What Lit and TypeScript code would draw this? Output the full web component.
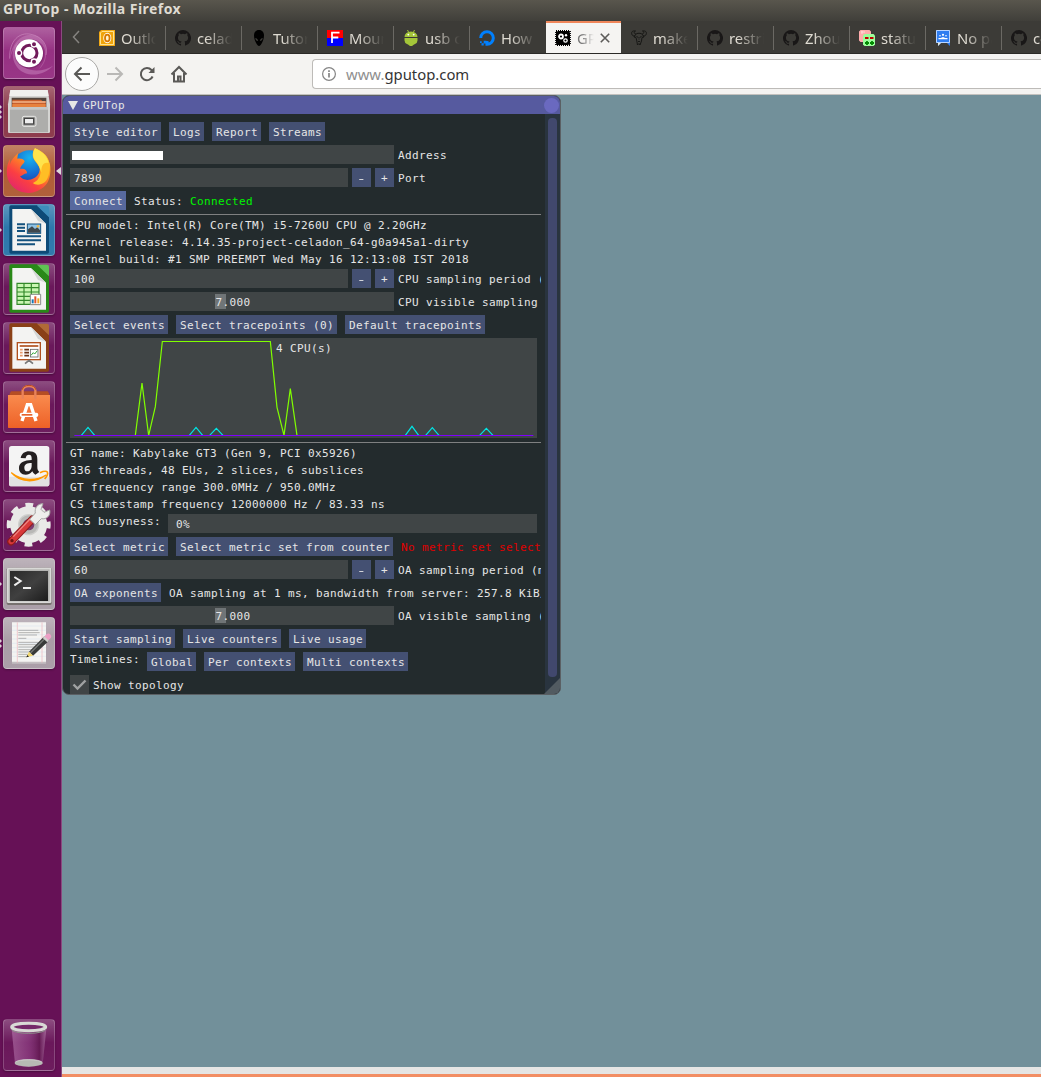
import { LitElement, html, css, svg, nothing } from "lit";
import type { TemplateResult } from "lit";
import { customElement } from "lit/decorators.js";
import { classMap } from "lit/directives/class-map.js";

/* ---------- favicons, 16x16 ---------- */
const octocat = svg`<path fill="#191717" d="M8 0a8 8 0 0 0-2.53 15.59c.4.07.55-.17.55-.38v-1.49c-2.23.49-2.7-.94-2.7-.94-.36-.92-.89-1.17-.89-1.17-.73-.5.05-.49.05-.49.81.06 1.23.83 1.23.83.72 1.23 1.88.87 2.34.67.07-.52.28-.88.51-1.08-1.78-.2-3.64-.89-3.64-3.95 0-.87.31-1.59.82-2.15-.08-.2-.36-1.02.08-2.12 0 0 .67-.22 2.2.82a7.6 7.6 0 0 1 4 0c1.53-1.04 2.2-.82 2.2-.82.44 1.1.16 1.92.08 2.12.51.56.82 1.27.82 2.15 0 3.07-1.87 3.75-3.65 3.95.29.25.54.73.54 1.48v2.19c0 .21.15.46.55.38A8 8 0 0 0 8 0z"/>`;
const favicons: Record<string, unknown> = {
  outlook: svg`<path d="M2 0h14v16H0V2z" fill="#f0a30a"/><path d="M3 1.4h11.6v13.2H1.4V3z" fill="none" stroke="#ffe9a0"/><ellipse cx="8.3" cy="8" rx="2.7" ry="3.9" fill="#ffd76a" stroke="#fff" stroke-width="2.6"/><ellipse cx="8.3" cy="8" rx="2.3" ry="3.4" fill="#fff3d0" stroke="#d87800" stroke-width="1.8"/>`,
  github: octocat,
  alien: svg`<path d="M8 0C4.5 0 3 2.5 3 5.6c0 4.400 3 10.400 5 10.400s5-6 5-10.400C13 2.500 11.500 0 8 0z" fill="#000"/><path d="M4.300 8c1.400.2 2.700 1.300 2.800 3-1.600 0-2.700-1.200-2.800-3zM11.700 8c-1.400.2-2.700 1.300-2.800 3 1.600 0 2.700-1.200 2.800-3z" fill="#3c3b37"/>`,
  mount: svg`<rect width="16" height="8" fill="#f00"/><rect y="8" width="16" height="8" fill="#00f"/><path d="M5 13V2.700h7.500M5 7.500h6.300" stroke="#fff" stroke-width="1.800" fill="none"/>`,
  android: svg`<path d="M1.500 7a6.500 5.500 0 0 1 13 0zM1.500 8h13v2.500a4 4 0 0 1-2.500 3.500l-1 .5-2 1.500H7l-2-1.500-1-.5a4 4 0 0 1-2.500-3.500z" fill="#a4c639"/><path d="M4.500 0l1.500 3M11.500 0L10 3" stroke="#a4c639"/><circle cx="5.300" cy="4.600" r=".9" fill="#fff"/><circle cx="10.700" cy="4.600" r=".9" fill="#fff"/>`,
  ocean: svg`<path d="M1.700 8A6.300 6.300 0 1 1 8 14.300V11" fill="none" stroke="#0080ff" stroke-width="3"/><path d="M4.700 10.700h2.700v2.700H4.700zM2.500 13.200h2.200v2.200H2.500zM1 11.200h1.700v1.700H1z" fill="#0080ff"/>`,
  gpu: svg`<rect x="1" y="1" width="14" height="14" fill="none" stroke="#000" stroke-width="1.800" stroke-dasharray="1 1"/><rect x="1" y="1" width="14" height="14" rx="2.500" fill="#000"/><circle cx="6" cy="6.500" r="2" fill="none" stroke="#fff" stroke-width="1.800"/><circle cx="11" cy="5.300" r="1.200" fill="#fff"/><circle cx="10.500" cy="10.500" r="1.700" fill="none" stroke="#fff" stroke-width="1.300"/>`,
  gnu: svg`<path d="M5 4C3 4 2.500 1.500 4.500 1 1.500.5 0 2 .8 4.300c.4 1.300 2 2 3.500 1.700M11 4c2 0 2.500-2.500.5-3 3-.5 4.500 1 3.700 3.300-.4 1.300-2 2-3.500 1.700M4.500 4.500C6 2.800 10 2.800 11.500 4.500L13 7l-2 .5-.5 3.500L9 15l-1-1.500L6.500 15l-.7-4L5 7.500 3 7zM5.500 6.500l2 1M10.500 6.500l-2 1M7 11.500h2M7.500 9h1" fill="none" stroke="#171715"/>`,
  status: svg`<path d="M1.500 0h9L12 1.500V5H5v7H1.500L0 10.500v-9z" fill="#ffacac"/><path d="M2 2h4M3 1v3" stroke="#ffdada"/><path d="M5.500 4h9L16 5.500v9L14.500 16h-9L4 14.500v-9z" fill="#9cff9c"/><path d="M6 8h3.500M11 8h3.500" stroke="#c00000" stroke-width="1.800"/><path d="M6 13h4M8 11v4M11 13h4M13 11v4" stroke="#008a00" stroke-width="1.800"/>`,
  groups: svg`<path d="M1 0h14v16l-3-3H6l-3 3v-3H1z" fill="#2f7df0"/><path d="M1.500.5h13v12h-13z" fill="none" stroke="#b9d5ff" stroke-width="1"/><path d="M3 16v-3h3z" fill="#e8e5d5"/><circle cx="8" cy="4.800" r="1.100" fill="#fff"/><circle cx="5" cy="5.800" r=".8" fill="#fff"/><circle cx="11" cy="5.800" r=".8" fill="#fff"/><path d="M3.500 9.300V8h2.200L8 7l2.300 1h2.200v1.300z" fill="#fff"/>`,
};

/* ---------- launcher icons, 156 units per 52px tile ---------- */
const docShape = (frame: string, corner: string, body: unknown) => svg`
  <path d="M24 4h78l36 34v106a5 5 0 0 1-5 5H24a5 5 0 0 1-5-5V9a5 5 0 0 1 5-5z" fill="${frame}"/>
  <path d="M102 5h30a6 6 0 0 1 6 6v29z" fill="${corner}"/>
  <path d="M28 15h56l45 44v81H28z" fill="#f3f3f2"/><path d="M84 15l45 44-24-8z" fill="#d3d6d6"/>${body}`;

const launcherIcons: Record<string, unknown> = {
  dash: svg`
    <path d="M20 95C18 40 50 14 84 22c34 6 52 34 45 62" fill="none" stroke="#d79ccc" stroke-width="3" opacity=".5"/>
    <path d="M22 95C26 30 80 10 112 34c26 24 22 74-4 92 30-34 22-74-8-86-40-12-70 14-78 55z" fill="#d79ccc" opacity=".35"/>
    <path d="M46 45C14 72 30 132 78 142c28 4 54-6 72-26-32 22-90 22-108-20-6-18-4-34 4-51z" fill="#d79ccc" opacity=".4"/>
    <circle cx="79" cy="81" r="44" fill="#5e1a50" opacity=".4"/>
    <circle cx="78" cy="79" r="42" fill="#fff"/>
    <circle cx="79" cy="78" r="23" fill="none" stroke="#711b5a" stroke-width="9"/>
    <g fill="#711b5a" stroke="#fff" stroke-width="4"><circle cx="48" cy="78" r="8"/><circle cx="93" cy="52" r="8"/><circle cx="93" cy="104" r="8"/></g>`,
  files: svg`
    <path d="M22 12h112l7 43v82a4 4 0 0 1-4 4H19a4 4 0 0 1-4-4V55z" fill="#d4d4d2"/>
    <path d="M22 12h112l3 18H19z" fill="#f0f0ee"/>
    <path d="M26 35h104v28H26z" fill="#51443d"/><path d="M28 41h86l4 4h10v18H28z" fill="#c95f2c"/>
    <path d="M28 48h100" stroke="#f3b58a" stroke-width="5"/><path d="M28 54h100v9H28z" fill="#e7813e"/>
    <path d="M21 63h114v76H21z" fill="#adadab"/><path d="M21 63h114v8H21z" fill="#c6c6c4"/>
    <rect x="58" y="91" width="41" height="30" rx="5" fill="#a9a9a7" stroke="#e8e8e6" stroke-width="3"/>
    <rect x="64" y="97" width="28" height="17" fill="#eee" stroke="#444" stroke-width="4"/>`,
  firefox: svg`
    <defs><linearGradient id="fx" x1=".9" y1="0" x2=".2" y2="1"><stop offset="0" stop-color="#fff14a"/><stop offset=".35" stop-color="#ff9a1c"/><stop offset=".7" stop-color="#fb3f42"/><stop offset="1" stop-color="#e0246f"/></linearGradient>
    <radialGradient id="fxb" cx=".5" cy=".2" r=".9"><stop offset="0" stop-color="#17b3ef"/><stop offset=".5" stop-color="#1868cf"/><stop offset="1" stop-color="#252387"/></radialGradient></defs>
    <circle cx="80" cy="72" r="56" fill="url(#fxb)"/>
    <path d="M96 10c22 10 36 20 42 40 6 8 8 50-10 70-34 38-94 28-112-14-8-22-5-48 5-64l-1 18c4-14 14-26 25-35l-2 16c12-2 20 2 22 8-4 10-13 13-13 23 12-3 21 4 20 13-10 1-14 8-21 9 12 19 49 11 57-11 6-16-2-28-13-38-8-8-8-23 1-35z" fill="url(#fx)"/>
    <path d="M96 10c22 10 36 20 42 40 3 26 1 49-13 62-12 10-30 8-35 2 15-6 21-18 23-32-1-13-8-22-17-34-8-12-8-25 0-38z" fill="#ffbe25"/>
    <path d="M96 10c22 10 36 22 41 44-17-5-23 12-22 28-5-18-12-28-19-36-8-12-7-24 0-36z" fill="#ffe34b"/>`,
  writer: docShape("#0d4a77", "#3d8cbb", svg`<path d="M42 61h24M42 71h24M42 81h24M42 97h72M42 109h72M42 121h54" stroke="#14527e" stroke-width="6"/><rect x="73" y="60" width="40" height="28" fill="#8fc2e5" stroke="#14527e" stroke-width="3"/><path d="M75 86V76l12-9 9 8 7-5 8 9v7z" fill="#3f474c"/><circle cx="105" cy="67" r="4" fill="#efb94d"/>`),
  calc: docShape("#298818", "#5fc253", svg`<rect x="42" y="60" width="66" height="64" fill="#c9f6b2"/><path d="M42 61h66v63H42zM42 74h66M42 87h66M42 100h66M42 112h66M63 61v63M85 61v63" fill="none" stroke="#33892a" stroke-width="3.500"/><path d="M82 94h31v31H82z" fill="#fff" stroke="#8a8a8a" stroke-width="3"/><path d="M89 109v12" stroke="#1478b5" stroke-width="6"/><path d="M97 100v21" stroke="#e2572b" stroke-width="6"/><path d="M106 106v15" stroke="#f0a529" stroke-width="6"/>`),
  impress: docShape("#8a4017", "#b06a36", svg`<rect x="43" y="62" width="69" height="51" fill="#fff" stroke="#b0501e" stroke-width="4"/><path d="M50 72h56" stroke="#b0501e" stroke-width="5"/><path d="M51 83h8M51 92h8M51 101h8" stroke="#e89a6b" stroke-width="5"/><path d="M64 83h14M64 92h14M64 101h14" stroke="#6d3417" stroke-width="5"/><rect x="82" y="82" width="23" height="23" fill="#fff" stroke="#666" stroke-width="2.500"/><path d="M84 100l7-8 4 4 8-10" fill="none" stroke="#31a436" stroke-width="3"/><path d="M66 125l12-10 12 10M78 114v6" fill="none" stroke="#777" stroke-width="5"/>`),
  software: svg`<defs><linearGradient id="bag" x2="0" y2="1"><stop offset="0" stop-color="#f98b4e"/><stop offset="1" stop-color="#ee6127"/></linearGradient></defs>
    <path d="M20 38l4-7h110l5 7v8H20z" fill="#b54d24"/><path d="M15 42h126v97a2 2 0 0 1-2 2H17a2 2 0 0 1-2-2z" fill="url(#bag)"/>
    <path d="M59 53V28a18 12 0 0 1 38 0v25" fill="none" stroke="#e9835a" stroke-width="7"/><path d="M58 26a20 13 0 0 1 40 0" fill="none" stroke="#b94b23" stroke-width="3"/>
    <path d="M57 120l16-49h10l16 49" fill="none" stroke="#fff" stroke-width="10"/><rect x="50" y="95" width="56" height="13" rx="6" fill="#fff"/><path d="M56 101.500h32" stroke="#e6642d" stroke-width="5"/>`,
  amazon: svg`<rect x="18" y="18" width="121" height="121" rx="8" fill="#f4f4f4"/><path d="M18 110h121v21a8 8 0 0 1-8 8H26a8 8 0 0 1-8-8z" fill="#e2e2e2"/>
    <path d="M53 54c3-14 13-20 25-20 18 0 25 8 25 24v22c0 9 2 12 6 16l-12 8c-5-3-7-6-9-10-7 8-13 10-20 10-13 0-20-8-20-20 0-17 16-23 38-24v-5c0-8-3-11-8-11s-9 3-10 11zm33 15c-14 0-22 4-22 14 0 7 3 11 9 11 9 0 13-9 13-17z" fill="#231f20" />
    <path d="M25 98c34 26 74 26 104 7-32 24-77 24-104-7z" fill="#f90" stroke="#f90" stroke-width="4"/><path d="M111 98c9-4 19-5 22-2 2 4-2 14-8 21" fill="none" stroke="#f90" stroke-width="5"/>`,
  settings: svg`<circle cx="77" cy="77" r="42" fill="none" stroke="#e9e9e7" stroke-width="27"/><circle cx="77" cy="77" r="58" fill="none" stroke="#e9e9e7" stroke-width="16" stroke-dasharray="22.780 22.780" stroke-dashoffset="11.390"/>
    <circle cx="77" cy="77" r="30" fill="#b8b8b6" stroke="#cfcfcd" stroke-width="4"/><circle cx="77" cy="77" r="17" fill="#7c3f70"/>
    <path d="M24 128l64-67" stroke="#8d1b1d" stroke-width="23" stroke-linecap="round"/><path d="M25 127l63-66" stroke="#d8393a" stroke-width="17" stroke-linecap="round"/><path d="M31 113l50-53" stroke="#ef8581" stroke-width="4"/>
    <path d="M80 61l17-19c-3-15 7-28 23-28l-6 17 9 9 17-7c4 17-10 29-25 26L97 77z" fill="#eeeeec" stroke="#a6a6a4" stroke-width="3"/><circle cx="27" cy="125" r="5" fill="#6c1416"/>`,
  terminal: svg`<defs><linearGradient id="tm" x2="1" y2="1"><stop offset="0" stop-color="#292929"/><stop offset=".5" stop-color="#404040"/><stop offset="1" stop-color="#1c1c1c"/></linearGradient></defs>
    <rect x="11" y="29" width="135" height="112" rx="5" fill="#77716f"/><rect x="12" y="29" width="133" height="106" rx="4" fill="#d9d9d7"/><rect x="17" y="34" width="123" height="96" fill="#b3b3b1"/><rect x="21" y="39" width="114" height="90" fill="url(#tm)"/><path d="M34 57l19 12-19 13M60 90h24" fill="none" stroke="#eee" stroke-width="6"/>`,
  editor: svg`<path d="M27 16h102v121H27z" fill="#f4f4f2"/><path d="M27 134h102v6H27z" fill="#c2bdc0"/><path d="M27 27h102M27 40h102M27 53h102M27 66h102M27 79h102M27 92h102M27 105h102M27 118h102" stroke="#d7e3ee" stroke-width="1.500"/><path d="M43 16v121M117 16v121" stroke="#efb4bb" stroke-width="2"/>
    <path d="M46 40h60M46 47h64M46 54h56M46 64h24M46 76h60M46 83h54M46 90h50M46 98h44M46 105h38M46 112h30M46 119h26" stroke="#a5a5a3" stroke-width="2.500"/>
    <path d="M78 104l46-46 14 13-48 45z" fill="#383a39"/><path d="M82 108l46-46" stroke="#737573" stroke-width="4"/><path d="M123 59l8-8c7-6 18 4 12 12l-8 8z" fill="#eb9fc5"/><path d="M119 63l5-5 14 13-5 5z" fill="#cfcfcd"/><path d="M70 121l8-17 12 12z" fill="#f1d76c"/><path d="M70 121l3-7 5 5z" fill="#222"/>`,
  trash: svg`<defs><linearGradient id="tr"><stop offset="0" stop-color="#c58abd" stop-opacity=".5"/><stop offset=".5" stop-color="#9b4e92" stop-opacity=".5"/><stop offset=".8" stop-color="#611950" stop-opacity=".7"/><stop offset="1" stop-color="#b883b0" stop-opacity=".6"/></linearGradient></defs>
    <path d="M26 30h104l-11 104a42 12 0 0 1-83 0z" fill="url(#tr)"/><ellipse cx="77" cy="132" rx="42" ry="11" fill="#b7b9b4"/><path d="M37 129a42 10 0 0 1 80 0" fill="none" stroke="#dededc" stroke-width="2"/>
    <ellipse cx="77" cy="24" rx="51" ry="11" fill="#742a69" stroke="#d9dbd6" stroke-width="9"/><path d="M26 31a51 12 0 0 0 102 0" fill="none" stroke="#8e918c" stroke-width="3"/>`,
};

@customElement("launcher-bar")
class LauncherBar extends LitElement {
  static styles = css`
    :host { display: flex; flex-direction: column; box-sizing: border-box; width: 62px; padding: 6px 0 6px 3px; gap: 7px; background: #661156; border-right: 1px solid #8b4a7f; }
    .tile { position: relative; box-sizing: border-box; width: 52px; height: 52px; flex: none; border-radius: 4px; border: 1px solid rgba(255, 255, 255, 0.2); background: linear-gradient(rgba(255, 255, 255, 0.25), rgba(255, 255, 255, 0.03) 45%, rgba(255, 255, 255, 0.05)); box-shadow: 0 1px 2px rgba(0, 0, 0, 0.3); }
    .tile > svg { display: block; width: 52px; height: 52px; margin: -1px; }
    .dash { background-color: #932b7f; }
    .files { background-color: #883345; }
    .firefox { background-color: #ad5830; }
    .writer { background-color: #2673a9; }
    .terminal, .editor { background-color: #a79aa4; }
    .trash { margin-top: auto; }
    .pips { position: absolute; left: -4px; top: 0; height: 50px; display: flex; flex-direction: column; justify-content: center; gap: 1px; }
    .pip { border: 2px solid transparent; border-left-color: #d9cfd6; border-right: 0; }
    .current { position: absolute; left: 52px; top: 21px; border: 4px solid transparent; border-right: 5px solid #ddd6da; border-left: 0; }
  `;
  private items: [string, number][] = [["dash", 0], ["files", 3], ["firefox", 1], ["writer", 1], ["calc", 0], ["impress", 0], ["software", 0], ["amazon", 0], ["settings", 0], ["terminal", 1], ["editor", 2], ["trash", 0]];
  render() {
    return this.items.map(([name, pips]) => html`<div class=${classMap({ tile: true, [name]: true })}>
      <svg viewBox="0 0 156 156">${launcherIcons[name]}</svg>
      ${pips ? html`<div class="pips">${Array.from({ length: pips }, () => html`<i class="pip"></i>`)}</div>` : nothing}
      ${name === "firefox" ? html`<i class="current"></i>` : nothing}
    </div>`);
  }
}

@customElement("browser-chrome")
class BrowserChrome extends LitElement {
  static styles = css`
    :host { display: block; font: 15px "Noto Sans", "Open Sans", sans-serif; }
    .tabs { display: flex; height: 33px; box-sizing: border-box; background: #3c3b37; border-bottom: 1px solid #2b2a27; overflow: hidden; }
    .scroll { width: 28px; flex: none; display: flex; align-items: center; justify-content: center; }
    .tab { position: relative; box-sizing: border-box; width: 76px; flex: none; display: flex; align-items: center; gap: 6px; padding: 1px 0 0 9px; color: #dfdbd2; }
    .tab::after { content: ""; position: absolute; right: 0; top: 5px; height: 24px; width: 1px; background: #6b6964; }
    .tab svg { width: 16px; height: 16px; flex: none; }
    .label { width: 35px; overflow: hidden; white-space: nowrap; line-height: 22px; font-size: 14.800px; -webkit-mask-image: linear-gradient(90deg, #000 25%, transparent); mask-image: linear-gradient(90deg, #000 25%, transparent); }
    .active { background: #f5f4f2; border-top: 2px solid #f0865a; color: #777; height: 33px; width: 75px; margin-right: 1px; padding: 0 0 2px 9px; }
    .active::after, .preactive::after { display: none; }
    .active .label { width: 17px; }
    .active .close { width: 10px; height: 10px; }
    .nav { box-sizing: border-box; height: 41px; display: flex; align-items: center; padding: 0 0 1px 3px; background: #f4f3f1; border-bottom: 1px solid #c3c1be; }
    .back { box-sizing: border-box; width: 34px; height: 34px; border-radius: 50%; background: #fcfcfc; border: 1px solid #a9a8a6; display: flex; align-items: center; justify-content: center; }
    .glyph { width: 18px; height: 18px; fill: none; stroke: #5a5957; stroke-width: 2; }
    .forward { margin-left: 7px; stroke: #b9b8b6; }
    .reload { margin-left: 14px; }
    .home { margin-left: 14px; }
    .url { flex: 1; margin-left: 124px; height: 28px; border: 1px solid #bdbbb8; border-right: 0; border-radius: 4px 0 0 4px; background: #fff; display: flex; align-items: center; color: #8f8f8f; font-size: 14.850px; white-space: pre; }
    .url svg { width: 14px; height: 14px; margin: 0 10px 0 9px; }
    .host { color: #343434; }
  `;
  private tabs: [string, string][] = [["outlook", "Outlo"], ["github", "celad"], ["alien", "Tutor"], ["mount", "Moun"], ["android", "usb c"], ["ocean", "How t"], ["gpu", "GPU"], ["gnu", "make"], ["github", "restri"], ["github", "Zhou"], ["status", "status"], ["groups", "No pa"], ["github", "ce"]];
  render() {
    return html`
      <div class="tabs">
        <div class="scroll"><svg width="8" height="14" viewBox="0 0 8 14"><path d="M7 1L1.500 7 7 13" fill="none" stroke="#85837f" stroke-width="1.500"/></svg></div>
        ${this.tabs.map(([icon, label]) => html`<div class=${classMap({ tab: true, active: icon === "gpu", preactive: icon === "ocean" })}>
          <svg viewBox="0 0 16 16">${favicons[icon]}</svg><span class="label">${label}</span>
          ${icon === "gpu" ? html`<svg class="close" viewBox="0 0 10 10"><path d="M.8.8l8.400 8.400M9.200.8L.8 9.200" stroke="#5c5b59" stroke-width="1.600"/></svg>` : nothing}
        </div>`)}
      </div>
      <div class="nav">
        <div class="back"><svg class="glyph" viewBox="0 0 18 18"><path d="M17 9H2M8.500 2.500L2 9l6.500 6.500"/></svg></div>
        <svg class="glyph forward" viewBox="0 0 18 18"><path d="M1 9h15M9.500 2.500L16 9l-6.500 6.500"/></svg>
        <svg class="glyph reload" viewBox="0 0 18 18"><path d="M14.600 11.500A6.100 6.100 0 1 1 13.500 5l1.500 1.500"/><path d="M16.500 2v6h-6z" fill="#5a5957" stroke="none"/></svg>
        <svg class="glyph home" viewBox="0 0 18 18"><path d="M1.500 9.500L9 2l7.500 7.500M4 8v8.500h10V8"/><path d="M8 16v-4.500h2.500V16" stroke-width="2"/></svg>
        <div class="url"><svg viewBox="0 0 14 14" fill="none" stroke="#858585"><circle cx="7" cy="7" r="6.400" stroke-width="1.200"/><path d="M7 6v4.500M7 3.300v1.600" stroke-width="1.700"/></svg><span>www.<span class="host">gputop.com</span></span></div>
      </div>`;
  }
}

@customElement("gputop-panel")
class GpuTopPanel extends LitElement {
  static styles = css`
    :host { display: flex; flex-direction: column; position: relative; box-sizing: border-box; width: 499px; height: 600px; border: 1px solid #5b6064; border-radius: 7px; overflow: hidden; background: #232b2d; color: #e6e6e6; font: 11px/13px "DejaVu Sans Mono", monospace; letter-spacing: 0.378px; white-space: pre; }
    .title { display: flex; align-items: center; height: 18px; flex: none; background: #565a9f; padding-left: 5px; }
    .title svg { width: 10px; height: 9px; margin-right: 5px; }
    .dot { width: 15px; height: 15px; border-radius: 50%; background: #6a69c0; margin-left: auto; margin-right: 1px; }
    .main { display: flex; flex: 1; min-height: 0; }
    .content { box-sizing: border-box; width: 478px; padding: 8px 0 0 7px; display: flex; flex-direction: column; gap: 4px; overflow: hidden; }
    .row { display: flex; height: 19px; flex: none; gap: 8px; align-items: center; }
    .row.top { align-items: flex-start; gap: 7px; }
    .row.tight { gap: 4px; }
    .row > * { flex: none; }
    .text { padding-top: 2px; }
    .top > .text { padding-top: 1px; }
    .btn { box-sizing: border-box; height: 19px; padding: 4px 3px 2px 4px; background: #445072; margin-right: -0.02px; }
    .top > .btn + .btn { margin-left: 1px; }
    .hot { background: #57699e; }
    .step { box-sizing: border-box; width: 19px; height: 19px; background: #445072; text-align: center; padding-top: 4px; }
    .minus { display: inline-block; transform: scaleX(1.45); }
    .field { box-sizing: border-box; width: 324px; height: 19px; padding: 4px 4px 2px; background: #404546; }
    .short { width: 278px; }
    .redacted { display: block; width: 91px; height: 9px; margin: 2px 0 0 -2px; background: #fff; }
    .slider { display: flex; justify-content: center; position: relative; padding-left: 6px; }
    .grab { position: absolute; left: 145px; top: 2px; width: 11px; height: 15px; background: #707577; }
    .value { position: relative; }
    .rule { height: 1px; margin: 0 0 -1px -4px; background: #7f8081; flex: none; }
    .line { height: 13px; line-height: 15px; flex: none; }
    .plot { position: relative; width: 467px; height: 100px; flex: none; background: #404546; white-space: normal; }
    .plot svg { display: block; width: 467px; height: 100px; fill: none; }
    .caption { position: absolute; left: 206px; top: 4px; }
    .busy { box-sizing: border-box; width: 369px; height: 19px; padding: 4px 8px 2px; background: #404546; }
    .ok { color: #00f400; }
    .bad { color: #e00000; }
    .check { width: 19px; height: 19px; background: #404546; }
    .track { margin-left: 4px; width: 15px; background: #29343f; display: flex; flex-direction: column; padding: 4px 0 17px; box-sizing: border-box; align-items: center; }
    .thumb { width: 9px; flex: 1; border-radius: 4px; background: #41486d; }
    .grip { position: absolute; right: 0; bottom: 0; width: 16px; height: 16px; }
  `;
  private buttons(labels: string[]): TemplateResult[] {
    return labels.map((l) => html`<span class="btn">${l}</span>`);
  }
  private stepper(value: string, label: string) {
    return html`<div class="row tight"><span class="field short">${value}</span><span class="step"><span class="minus">-</span></span><span class="step">+</span><span class="text">${label}</span></div>`;
  }
  private slider(label: string) {
    return html`<div class="row tight"><span class="field slider"><i class="grab"></i><span class="value">7.000</span></span><span class="text">${label}</span></div>`;
  }
  private lines(texts: string[]) {
    return texts.map((t) => html`<div class="line">${t}</div>`);
  }
  render() {
    return html`
      <div class="title"><svg viewBox="0 0 10 9"><path d="M0 0h10L5 9z" fill="#e6e6e6"/></svg>GPUTop<i class="dot"></i></div>
      <div class="main">
        <div class="content">
          <div class="row">${this.buttons(["Style editor", "Logs", "Report", "Streams"])}</div>
          <div class="row tight"><span class="field"><i class="redacted"></i></span><span class="text">Address</span></div>
          ${this.stepper("7890", "Port")}
          <div class="row"><span class="btn hot">Connect</span><span class="text">Status: <span class="ok">Connected</span></span></div>
          <div class="rule"></div>
          ${this.lines(["CPU model: Intel(R) Core(TM) i5-7260U CPU @ 2.20GHz", "Kernel release: 4.14.35-project-celadon_64-g0a945a1-dirty", "Kernel build: #1 SMP PREEMPT Wed May 16 12:13:08 IST 2018"])}
          ${this.stepper("100", "CPU sampling period (ms)")}
          ${this.slider("CPU visible sampling (s)")}
          <div class="row">${this.buttons(["Select events", "Select tracepoints (0)", "Default tracepoints"])}</div>
          <div class="plot">
            <svg viewBox="0 0 1401 300" stroke-width="3.600">
              <path stroke="#00e5e5" d="M34 292l20-24 20 24M358 292l20-24 20 24M419 292l20-21 20 21M1006 292l20-27 20 27M1067 292l20-23 20 23M1229 292l20-21 20 21"/>
              <path stroke="#80ff00" d="M196 292l20-157 20 157 20-86 21-195.500h324l20 197.500 21 84 19-140 20 140"/>
              <path stroke="#7f00ff" d="M13 292.500h1377"/>
            </svg>
            <span class="caption">4 CPU(s)</span>
          </div>
          <div class="rule"></div>
          ${this.lines(["GT name: Kabylake GT3 (Gen 9, PCI 0x5926)", "336 threads, 48 EUs, 2 slices, 6 subslices", "GT frequency range 300.0MHz / 950.0MHz", "CS timestamp frequency 12000000 Hz / 83.33 ns"])}
          <div class="row top"><span class="text">RCS busyness:</span><span class="busy">0%</span></div>
          <div class="row">${this.buttons(["Select metric", "Select metric set from counter"])}<span class="text bad">No metric set selected</span></div>
          ${this.stepper("60", "OA sampling period (ms)")}
          <div class="row">${this.buttons(["OA exponents"])}<span class="text">OA sampling at 1 ms, bandwidth from server: 257.8 KiB/s</span></div>
          ${this.slider("OA visible sampling (s)")}
          <div class="row">${this.buttons(["Start sampling", "Live counters", "Live usage"])}</div>
          <div class="row top"><span class="text">Timelines:</span>${this.buttons(["Global", "Per contexts", "Multi contexts"])}</div>
          <div class="row tight"><svg class="check" viewBox="0 0 19 19"><path d="M3.500 9.500l4 4L15.500 5.500" fill="none" stroke="#a0a2a2" stroke-width="2.400"/></svg><span class="text">Show topology</span></div>
        </div>
        <div class="track"><div class="thumb"></div></div>
      </div>
      <svg class="grip" viewBox="0 0 16 16"><path d="M16 0v16H0z" fill="#525b61"/></svg>`;
  }
}

@customElement("app-root")
class AppRoot extends LitElement {
  static styles = css`
    :host { display: flex; flex-direction: column; width: 1041px; height: 1077px; overflow: hidden; background: #72909a; }
    .titlebar { box-sizing: border-box; height: 21px; flex: none; padding-left: 3px; background: linear-gradient(#59564d, #403f3a); color: #dfdbd2; font: bold 14px/18px "Noto Sans", "Open Sans", sans-serif; letter-spacing: 0.45px; white-space: nowrap; }
    .body { display: flex; flex: 1; min-height: 0; }
    .browser { flex: 1; min-width: 0; display: flex; flex-direction: column; }
    .page { flex: 1; }
    .foot { height: 7px; background: #e5e5e4; border-bottom: 3px solid #f28e64; }
  `;
  render() {
    return html`
      <div class="titlebar">GPUTop - Mozilla Firefox</div>
      <div class="body">
        <launcher-bar></launcher-bar>
        <div class="browser">
          <browser-chrome></browser-chrome>
          <div class="page"><gputop-panel></gputop-panel></div>
          <div class="foot"></div>
        </div>
      </div>`;
  }
}
